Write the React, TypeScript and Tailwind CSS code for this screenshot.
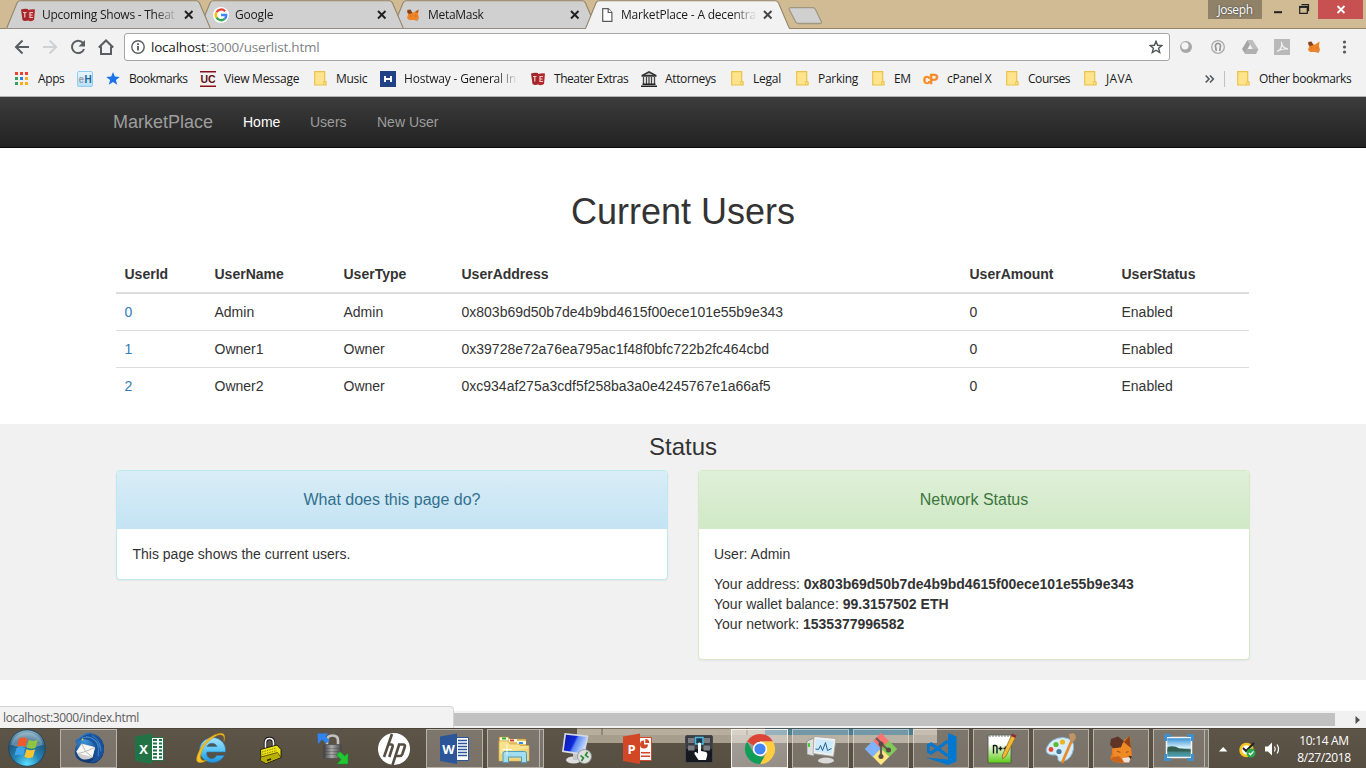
import React from "react";

const seg = "font-['Open_Sans','Noto_Sans',sans-serif]";

/* ---------- small icons ---------- */

const TE = () => (
  <svg width="16" height="16" viewBox="0 0 16 16">
    <path d="M1 2.500Q4 1.500 8 2L8 13.500Q4.500 14.500 2.500 13Z" fill="#a3262a" />
    <path d="M8 3Q12 2 15 2.500L14 13Q11.500 15 8 13.500Z" fill="#b3282d" />
    <path d="M3 5.500h3.500M4.800 5.500v5M13 5.500h-3v5h3M10 8h2.500" stroke="#f0c9ca" strokeWidth="1.200" fill="none" />
  </svg>
);

const Google = () => (
  <svg width="16" height="16" viewBox="0 0 16 16">
    <circle cx="8" cy="8" r="8" fill="#fff" />
    <g fill="none" strokeWidth="2.300">
      <path d="M12.100 4.200A5.300 5.300 0 0 0 3.500 5.300" stroke="#ea4335" />
      <path d="M3.500 5.300a5.300 5.300 0 0 0 0 5.400" stroke="#fbbc05" />
      <path d="M3.500 10.700a5.300 5.300 0 0 0 8.200 1.100" stroke="#34a853" />
      <path d="M11.700 11.800A5 5 0 0 0 13.300 8H8" stroke="#4285f4" />
    </g>
  </svg>
);

const FoxSmall = () => (
  <svg width="14" height="14" viewBox="0 0 14 14">
    <path d="M1.500 2.500L5 4.500H8L12.500 1.500L12 6L13 10L11.500 13L8 12H3L1 10L2 7Z" fill="#ee8427" />
    <path d="M1.200 2L4.500 1.500L6.500 5L3.500 6L1.500 5Z" fill="#86431d" />
    <path d="M9 4L12.500 1.500L12 5Z" fill="#b65c1f" />
    <path d="M4 7.500h1.500v1H4zM9 7.500h1.500v1H9z" fill="#c9671c" />
    <path d="M10 11l2.500-.5-1 2.500z" fill="#a5a19c" />
  </svg>
);

const Page = () => (
  <svg className="ml-[3px]" width="11" height="14" viewBox="0 0 11 14" fill="#fff" stroke="#5a5a5a" strokeWidth="1.200">
    <path d="M.7.7h5.500L9.900 4.500v8.800H.7z" />
    <path d="M6.200 .7v3.800h3.700" />
  </svg>
);

const Folder = () => (
  <svg width="13" height="15" viewBox="0 0 13 15">
    <path d="M.7.700h10v9.500l1.400.8v3H.7z" fill="#ffe48d" stroke="#ebc34a" strokeWidth="1.200" />
    <path d="M9.800 14v-3.500h2.400" fill="none" stroke="#ebc34a" strokeWidth="1" />
  </svg>
);

const AppsIcon = () => (
  <svg className="ml-px" width="13" height="13" viewBox="0 0 13 13">
    <path d="M0 0h3v3H0zM5 0h3v3H5zM10 0h3v3h-3z" fill="#ea4335" />
    <path d="M0 5h3v3H0zM0 10h3v3H0z" fill="#34a25a" />
    <path d="M5 5h3v3H5z" fill="#2a80e8" />
    <path d="M5 10h3v3H5zM10 5h3v3h-3zM10 10h3v3h-3z" fill="#f6b01a" />
  </svg>
);

const EH = () => (
  <svg width="16" height="16" viewBox="0 0 16 16">
    <defs>
      <linearGradient id="eh" x1="0" y1="0" x2="0" y2="1">
        <stop offset="0" stopColor="#e9f6fd" />
        <stop offset="1" stopColor="#b4e0fa" />
      </linearGradient>
    </defs>
    <rect x=".5" y=".5" width="15" height="15" rx="1.500" fill="url(#eh)" stroke="#8fcdf2" />
    <text x="1.600" y="11.800" fontSize="10" fontWeight="700" fontFamily="Liberation Sans" fill="#9aa0a4" textLength="5.500">e</text>
    <text x="7.400" y="11.800" fontSize="10" fontWeight="700" fontFamily="Liberation Sans" fill="#1e6796">H</text>
  </svg>
);

const BlueStar = () => (
  <svg width="14" height="13" viewBox="0 0 14 13">
    <path d="M7 0l1.800 4.600 5 .3-3.900 3.100 1.300 4.800L7 10.100l-4.200 2.700 1.300-4.800L.2 4.900l5-.3z" fill="#1a73e8" />
  </svg>
);

const UC = () => (
  <svg width="16" height="16" viewBox="0 0 16 16">
    <path d="M0 0h16v1.500H0zM0 14.500h16V16H0z" fill="#8b1013" />
    <text x="8" y="12" textAnchor="middle" fontSize="10.500" fontWeight="700" fontFamily="Liberation Sans" fill="#5e1013">UC</text>
  </svg>
);

const Hostway = () => (
  <svg width="16" height="16" viewBox="0 0 16 16">
    <path d="M0 0h16v16H0z" fill="#1f4186" />
    <path d="M5 5v6M11 5v6M5 8h6" stroke="#fff" strokeWidth="1.900" />
  </svg>
);

const Court = () => (
  <svg width="16" height="16" viewBox="0 0 16 16">
    <path d="M8 0l7.500 4v1.700H.5V4z" fill="#333" />
    <path d="M4 4l4-2.200L12 4z" fill="#bbb" />
    <path d="M2.500 6v7M5.500 6v7M8 6v7M10.500 6v7M13.500 6v7" stroke="#444" strokeWidth="1.300" />
    <path d="M1.500 12.500h13V14h-13zM0 14.500h16V16H0z" fill="#222" />
  </svg>
);

const CP = () => (
  <svg width="17" height="14" viewBox="0 0 17 14">
    <text x="0" y="11.500" fontSize="14" fontWeight="700" fontFamily="Liberation Sans" fill="#f68b1f" stroke="#f68b1f" strokeWidth=".3" textLength="15.500">cP</text>
  </svg>
);

/* ---------- tab strip ---------- */

type TabProps = { icon: React.ReactNode; label: string; active?: boolean; z: string; text: string };

const Tab = ({ icon, label, active, z, text }: TabProps) => (
  <div className={`relative -mr-3 h-[29px] w-[205px] shrink-0 ${z}`}>
    <svg className="absolute inset-0" width="205" height="29" viewBox="0 0 205 29">
      <path
        d="M0 29L1 27.500L11 3Q12 .8 14 .8H190.500Q192.500 .8 193.500 3L204 27.500L205 29"
        fill={active ? "#f2f2f2" : "#d0d0d0"}
        stroke="#94856a"
        strokeWidth="1.100"
      />
      {!active && <path d="M0 28.500H205" stroke="#958d82" />}
    </svg>
    <div className="relative flex h-[29px] items-center pl-3.5 pt-px">
      <div className="flex w-[22px] shrink-0">{icon}</div>
      <div className={`w-[137px] whitespace-nowrap text-[12px] text-[#1b1b1b] ${text} [mask-image:linear-gradient(to_right,black_112px,transparent_136px)]`}>
        {label}
      </div>
      <svg width="15" height="10" viewBox="0 0 15 10">
        <path d="M6 1l7.500 7.500M13.500 1L6 8.500" stroke={active ? "#444" : "#1f1f1f"} strokeWidth="1.900" />
      </svg>
    </div>
  </div>
);

const TabStrip = () => (
  <div className="flex h-[29px] border-b border-[#94856a] bg-[#d1bb94]">
    <div className="flex h-[29px] w-[784px] pl-1.5">
      <Tab icon={<TE />} label="Upcoming Shows - Theat" z="z-[4]" text="tracking-[-0.25px]" />
      <Tab icon={<Google />} label="Google" z="z-[3]" text="tracking-[-0.2px]" />
      <Tab icon={<FoxSmall />} label="MetaMask" z="z-[2]" text="tracking-[-0.3px]" />
      <Tab icon={<Page />} label="MarketPlace - A decentra" active z="z-[5]" text="tracking-[-0.2px]" />
    </div>
    <svg className="ml-1 mt-[7px]" width="36" height="18" viewBox="0 0 36 18">
      <path d="M3.500.7H24.500Q26.500.7 27.500 2.500L33.500 15Q34 16.500 32 16.500H10.500Q8.500 16.500 7.500 14.500L1.200 2.500Q.8.700 3 .7z" fill="#d0d0d0" stroke="#a19880" strokeWidth="1.300" />
    </svg>
    <div className="grow" />
    <div className="flex h-[19px] w-[54px] items-center justify-center bg-[#8f8268] text-[12px] tracking-[-0.4px] text-white [text-shadow:0_0_2px_#333]">Joseph</div>
    <svg width="56" height="20" viewBox="0 0 56 20" fill="none" stroke="#222" strokeWidth="1.500">
      <path d="M12 12.200h8" strokeWidth="2" />
      <path d="M37.700 6.700h7.600v6.600h-7.600zM39.500 4.700h7v6.500" strokeWidth="1.200" />
      <path d="M37 6.900h9" strokeWidth="2" />
    </svg>
    <svg className="mr-[3px] bg-[#c75050]" width="45" height="19" viewBox="0 0 45 19">
      <path d="M19.500 6l7 7M26.500 6l-7 7" stroke="#fff" strokeWidth="1.800" />
    </svg>
  </div>
);

/* ---------- toolbar ---------- */

const NavIcons = () => (
  <svg width="124" height="36" viewBox="0 0 124 36" fill="none" stroke="#5a5d61" strokeWidth="2">
    <path d="M29 18H16.500M22.500 11.500l-6.500 6.500 6.500 6.500" />
    <path d="M43 18h12.500M49.500 11.500l6.500 6.500-6.500 6.500" stroke="#d0d1d3" />
    <path d="M83 14A6.200 6.200 0 1 0 84 20" />
    <path d="M85 11v6.500h-6.500z" fill="#5a5d61" stroke="none" />
    <path d="M98.800 18.500L106 11.500l7.200 7M101 17.500V25h10v-7.500" strokeWidth="2" />
  </svg>
);

const ExtIcons = () => (
  <svg width="196" height="36" viewBox="1 0 196 36">
    <circle cx="17" cy="18" r="6" fill="#a7a7a7" />
    <circle cx="16" cy="16.800" r="3.600" fill="#f5f5f5" />
    <circle cx="49" cy="18" r="6.300" fill="none" stroke="#a9a9a9" strokeWidth="1.300" />
    <path d="M47.300 22l-.6-3.800a2.600 2.600 0 1 1 4.600 0l-.6 3.800" fill="none" stroke="#959595" strokeWidth="1.700" />
    <path d="M78.500 11h5l6 9.500h-5.500z" fill="#bdbdbd" />
    <path d="M78.500 11l2.500 4.500-5 9-3-4.500z" fill="#a4a4a4" />
    <path d="M78.500 20h11l-2.500 5H75.500z" fill="#b0b0b0" />
    <path d="M105 10h16v16h-16z" fill="#b9b9b9" />
    <path d="M108 22.500q6-3 4.500-9.500q0 6 6.500 7q-6-.5-11 2.500" fill="none" stroke="#f0f0f0" strokeWidth="1.300" />
    <g transform="translate(138 11)">
      <path d="M1.500 2.500L5 4.500H8L12.500 1.500L12 6L13 10L11.500 13L8 12H3L1 10L2 7Z" fill="#ee8427" />
      <path d="M1.200 2L4.500 1.500L6.500 5L3.500 6L1.500 5Z" fill="#86431d" />
      <path d="M4 7.500h1.500v1H4zM9 7.500h1.500v1H9z" fill="#c9671c" />
      <path d="M10 11l2.500-.5-1 2.500z" fill="#a5a19c" />
    </g>
    <g fill="#55585c">
      <circle cx="175.500" cy="13" r="1.600" />
      <circle cx="175.500" cy="18" r="1.600" />
      <circle cx="175.500" cy="23" r="1.600" />
    </g>
  </svg>
);

const Toolbar = () => (
  <div className="flex h-[36px] bg-[#f2f2f2]">
    <NavIcons />
    <div className="mt-1 flex h-7 w-[1046px] shrink-0 items-center rounded-[3px] border border-[#a6a6a6] bg-white pl-1.5 pr-1.5">
      <svg width="14" height="14" viewBox="0 0 14 14">
        <circle cx="7" cy="7" r="6.200" fill="none" stroke="#5a5d61" strokeWidth="1.400" />
        <path d="M7 6v4.500M7 3.300v1.600" stroke="#444" strokeWidth="1.600" />
      </svg>
      <div className="ml-1.5 grow whitespace-nowrap text-[13.5px] tracking-[-0.21px] text-[#808285]">
        <span className="text-[#1a1a1a]">localhost</span>:3000/userlist.html
      </div>
      <svg width="14" height="14" viewBox="0 0 14 14">
        <path d="M7 1.300l1.600 4 4.300.3-3.300 2.700 1.100 4.200L7 10.200l-3.700 2.300 1.100-4.200L1.100 5.600l4.300-.3z" fill="none" stroke="#4f5257" strokeWidth="1.400" />
      </svg>
    </div>
    <ExtIcons />
  </div>
);

const bookmarks = [
  { icon: <AppsIcon />, label: "Apps", slot: "w-[63px]", iw: "w-6", t: "tracking-[-0.4px]" },
  { icon: <EH />, label: "", slot: "w-[29px]", iw: "w-[22px]", t: "" },
  { icon: <BlueStar />, label: "Bookmarks", slot: "w-[94px]", iw: "w-[23px]", t: "tracking-[-0.52px]" },
  { icon: <UC />, label: "View Message", slot: "w-[114px]", iw: "w-6", t: "tracking-[-0.25px]" },
  { icon: <Folder />, label: "Music", slot: "w-[66px]", iw: "w-[22px]", t: "tracking-[-0.3px]" },
  { icon: <Hostway />, label: "Hostway - General Inf", slot: "w-[150px]", iw: "w-6", t: "w-[120px] tracking-[-0.2px] [mask-image:linear-gradient(to_right,black_92px,transparent_114px)]" },
  { icon: <TE />, label: "Theater Extras", slot: "w-[111px]", iw: "w-6", t: "tracking-[-0.48px]" },
  { icon: <Court />, label: "Attorneys", slot: "w-[90px]", iw: "w-6", t: "tracking-[-0.35px]" },
  { icon: <Folder />, label: "Legal", slot: "w-[65px]", iw: "w-[22px]", t: "tracking-[-0.25px]" },
  { icon: <Folder />, label: "Parking", slot: "w-[76px]", iw: "w-[22px]", t: "tracking-[-0.3px]" },
  { icon: <Folder />, label: "EM", slot: "w-[51px]", iw: "w-[22px]", t: "tracking-[-0.4px]" },
  { icon: <CP />, label: "cPanel X", slot: "w-[83px]", iw: "w-6", t: "tracking-[-0.3px]" },
  { icon: <Folder />, label: "Courses", slot: "w-[78px]", iw: "w-[22px]", t: "tracking-[-0.45px]" },
  { icon: <Folder />, label: "JAVA", slot: "w-[121px]", iw: "w-[22px]", t: "tracking-[0.3px]" },
];

const BookmarkBar = () => (
  <div className="flex h-8 items-center border-b border-[#b0b3b2] bg-[#f2f2f2] pb-1 pl-[14px] text-[12px] text-[#1a1a1a]">
    {bookmarks.map((b, i) => (
      <div key={i} className={`flex shrink-0 items-center ${b.slot}`}>
        <div className={`flex shrink-0 ${b.iw}`}>{b.icon}</div>
        <div className={`whitespace-nowrap ${b.t}`}>{b.label}</div>
      </div>
    ))}
    <svg width="19" height="16" viewBox="0 0 19 16">
      <path d="M.7 4.500L4 8 .7 11.500M5 4.500L8.300 8 5 11.500" fill="none" stroke="#55585c" strokeWidth="1.600" />
    </svg>
    <div className="mr-3 h-4 w-px bg-[#c0c0c0]" />
    <Folder />
    <div className="ml-[9px] whitespace-nowrap tracking-[-0.42px]">Other bookmarks</div>
  </div>
);

/* ---------- page ---------- */

const cols = "grid grid-cols-[90px_129px_118px_508px_152px_136px]";
const users = [
  ["0", "Admin", "Admin", "0x803b69d50b7de4b9bd4615f00ece101e55b9e343", "0", "Enabled"],
  ["1", "Owner1", "Owner", "0x39728e72a76ea795ac1f48f0bfc722b2fc464cbd", "0", "Enabled"],
  ["2", "Owner2", "Owner", "0xc934af275a3cdf5f258ba3a0e4245767e1a66af5", "0", "Enabled"],
];

const PageContent = () => (
  <div className="h-[614px] overflow-hidden bg-white font-['Liberation_Sans',Arial,sans-serif] text-[14px] leading-5 text-[#333]">
    <nav className="flex h-[51px] items-center border-b border-[#080808] bg-gradient-to-b from-[#3c3c3c] to-[#222] pl-[113px] text-[#9d9d9d]">
      <span className="w-[130px] text-[18px]">MarketPlace</span>
      <span className="w-[67px] text-white">Home</span>
      <span className="w-[67px]">Users</span>
      <span>New User</span>
    </nav>
    <h1 className="mt-[44px] text-center text-[36px] leading-[40px]">Current Users</h1>
    <div className="ml-[116px] mt-[24px] w-[1133px]">
      <div className={`${cols} h-[38px] border-b-2 border-[#ddd] font-bold`}>
        {["UserId", "UserName", "UserType", "UserAddress", "UserAmount", "UserStatus"].map((h) => (
          <div key={h} className="p-2 pl-[8.5px]">{h}</div>
        ))}
      </div>
      {users.map((u, r) => (
        <div key={r} className={`${cols} h-[37px] ${r < 2 ? "border-b border-[#ddd]" : ""}`}>
          {u.map((c, i) => (
            <div key={i} className={`p-2 pl-[8.5px] ${i === 0 ? "text-[#337ab7]" : ""}`}>{c}</div>
          ))}
        </div>
      ))}
    </div>
    <section className="mt-[19px] h-[256px] bg-[#f1f1f1] pt-2.5">
      <h3 className="text-center text-[24px] leading-[26px]">Status</h3>
      <div className="mt-2.5 flex items-start gap-[30px] pl-[116px]">
        <div className="h-[110px] w-[552px] overflow-hidden rounded border border-[#bce8f1] bg-white shadow-[0_1px_2px_rgba(0,0,0,0.05)]">
          <div className="h-[58px] bg-gradient-to-b from-[#d9edf7] to-[#c4e3f3] text-center text-[16px] leading-[58px] text-[#31708f]">What does this page do?</div>
          <p className="px-[15.5px] pt-[15px]">This page shows the current users.</p>
        </div>
        <div className="h-[190px] w-[552px] overflow-hidden rounded border border-[#d6e9c6] bg-white shadow-[0_1px_2px_rgba(0,0,0,0.05)]">
          <div className="h-[58px] bg-gradient-to-b from-[#dff0d8] to-[#d0e9c6] text-center text-[16px] leading-[58px] text-[#3c763d]">Network Status</div>
          <div className="px-[15px] pt-[15px]">
            <p className="mb-2.5">User: Admin</p>
            <p>Your address: <b>0x803b69d50b7de4b9bd4615f00ece101e55b9e343</b></p>
            <p>Your wallet balance: <b>99.3157502 ETH</b></p>
            <p>Your network: <b>1535377996582</b></p>
          </div>
        </div>
      </div>
    </section>
  </div>
);

const ScrollBar = () => (
  <div className="relative flex h-[17px] items-center bg-[#f1f1f1]">
    <div className="ml-[17px] h-[13px] w-[1318px] bg-[#c1c1c1]" />
    <svg className="ml-5" width="6" height="8" viewBox="0 0 6 8"><path d="M.5 0v8L5 4z" fill="#505050" /></svg>
    <div className="absolute bottom-0 left-0 flex h-[22px] w-[454px] items-center rounded-tr-[4px] border-r border-t border-[#d4d4d4] bg-[#f2f2f2] pl-[3px] text-[12px] tracking-[-0.36px] text-[#5d5d5d]">
      localhost:3000/index.html
    </div>
  </div>
);

/* ---------- taskbar icons ---------- */

const S = ({ children, w = 32 }: { children: React.ReactNode; w?: number }) => (
  <svg width={w} height="36" viewBox={`0 0 ${w} 36`}>{children}</svg>
);

const StartOrb = () => (
  <svg width="40" height="40" viewBox="0 0 40 40">
    <defs>
      <radialGradient id="orb" cx=".5" cy=".95" r=".9">
        <stop offset="0" stopColor="#5fe0ff" />
        <stop offset=".4" stopColor="#2385b8" />
        <stop offset=".75" stopColor="#205a80" />
        <stop offset="1" stopColor="#7fa9bd" />
      </radialGradient>
    </defs>
    <circle cx="20" cy="20" r="18.300" fill="url(#orb)" stroke="#24455a" />
    <path d="M4 17A16.500 16.500 0 0 1 36 17Q20 22 4 17z" fill="#fff" opacity=".28" />
    <path d="M12 10.500q4.500-2 8.500.5l-2 8q-4-2.300-8.500-.5z" fill="#ef5b28" />
    <path d="M21.800 11.800q4 2.200 9 0l-2.300 8q-4.500 2-8.700-.2z" fill="#8fc63f" />
    <path d="M9.600 20q4.500-2 8.500.4l-2.100 7.600q-4-2.200-8.500-.4z" fill="#3fa4e8" />
    <path d="M19.500 21q4 2.300 8.700.3l-2.200 7.700q-4.500 2-8.600-.3z" fill="#fcc52d" />
  </svg>
);

const Thunderbird = () => (
  <S>
    <defs>
      <radialGradient id="tb" cx=".35" cy=".25" r=".85">
        <stop offset="0" stopColor="#3f97da" />
        <stop offset=".55" stopColor="#1b5399" />
        <stop offset="1" stopColor="#102458" />
      </radialGradient>
    </defs>
    <path d="M4 13Q0 9 6 7Q11 1 18 2Q29 4 31 15Q32 26 24 31Q21 33 16 32Q6 31 3 26Q0 19 4 13z" fill="url(#tb)" />
    <path d="M3.500 20.500L8.500 12.500L22 16L19.500 26.500Q14 29.500 9 28Q5 26 3.500 20.500z" fill="#cfcecb" />
    <path d="M3.500 20.500L9 13L22 16.500L19.500 26L5 22.500z" fill="#f7f7f5" />
    <path d="M9 13L12.500 20.500L22 16.500M5 22.500L12.500 20.500L19.500 26" fill="none" stroke="#b9b5b0" strokeWidth=".9" />
    <path d="M5 10Q13 6 19 11Q25 15 22.500 23Q21 29 16 32Q28 32 31 20Q31 7 18 3Q11 2 5 10z" fill="#1b519a" />
    <path d="M9 7q9-3 15 5q3 6 1 13M13 5.500q11 1 14.500 12M19 4.500q9 5 9 16" stroke="#3f8bcc" strokeWidth=".9" fill="none" />
    <circle cx="9.500" cy="8.500" r="1" fill="#e6cf52" />
  </S>
);

const Office = ({ letter, fill, kind }: { letter: string; fill: string; kind: string }) => (
  <S>
    <path d="M17.500 6.500h12v23h-12z" fill="#fff" stroke={fill} strokeWidth="1" />
    {kind === "x" && <path d="M19 9h4M25 9h3M19 12.500h4M25 12.500h3M19 16h4M25 16h3M19 19.500h4M25 19.500h3M19 23h4M25 23h3M19 26.500h4M25 26.500h3" stroke={fill} strokeWidth="2" />}
    {kind === "w" && <path d="M19 9.500h9M19 12.500h9M19 15.500h9M19 18.500h9M19 21.500h9M19 24.500h9" stroke={fill} strokeWidth="1.300" />}
    {kind === "p" && <path d="M22 9.500a4 4 0 1 0 4 4h-4zM23.300 8v4h4a4 4 0 0 0-4-4zM19 21h9v1.500h-9zM19 24.500h9V26h-9z" fill={fill} />}
    <path d="M1 5.500l17-3v30.500L1 30z" fill={fill} />
    <text x="9.500" y="22.500" textAnchor="middle" fontFamily="Open Sans" fontWeight="700" fontSize="13" fill="#fff">{letter}</text>
  </S>
);

const IE = () => (
  <S>
    <defs>
      <linearGradient id="ie" x1="0" y1="0" x2="0" y2="1">
        <stop offset="0" stopColor="#a9e2fb" />
        <stop offset=".5" stopColor="#5cc6f5" />
        <stop offset="1" stopColor="#1f93dc" />
      </linearGradient>
    </defs>
    <path d="M30.500 20.500A13 12.500 0 1 0 29.300 24.500H21.500a5 5 0 0 1-9.500-3.500H30.500zM12 15.500a5.500 5.500 0 0 1 10 0z" fill="url(#ie)" stroke="#1d79ba" strokeWidth=".6" />
    <path d="M29 10.500Q31.500 1.500 25 2.300Q14 4 6 16.500Q-1 29 3 31.300Q7 32.500 12 29.300Q5 31 5.500 25Q7 16 15 9Q24 1.500 28 4.500Q29.500 6 29 10.500z" fill="#f5c021" stroke="#c68e12" strokeWidth=".5" />
  </S>
);

const Padlock = () => (
  <S>
    <path d="M9.500 18v-6.500q0-4 4-4t4 4V15" fill="none" stroke="#151515" strokeWidth="3.400" />
    <path d="M9.500 18v-6.500q0-4 4-4t4 4V15" fill="none" stroke="#f2f2f2" strokeWidth="1.700" />
    <path d="M4.500 18.500L21 14l4 4.500v8L10 32.500l-5-3z" fill="#ece318" stroke="#171600" strokeWidth=".9" />
    <path d="M5 26l16-4 3.500 4-14.500 6-5-2.500z" fill="#b8af00" />
    <path d="M5 26l16.500-4.500 3.500 5" stroke="#3b3700" fill="none" strokeWidth=".8" />
    <path d="M6 21l14.500-4M6 23.500l15-4" stroke="#8d8600" strokeWidth="1" strokeDasharray="1.500 1" />
    <path d="M11 29.500l4-1.500" stroke="#292600" strokeWidth="1.600" />
  </S>
);

const WinScp = () => (
  <S>
    <defs>
      <linearGradient id="lk" x1="0" y1="0" x2="1" y2="0">
        <stop offset="0" stopColor="#3c3c3c" />
        <stop offset=".45" stopColor="#a9a9a9" />
        <stop offset="1" stopColor="#454545" />
      </linearGradient>
    </defs>
    <path d="M10 15V9.500q0-5 5.500-5t5.500 5V15" fill="none" stroke="#c4c4c4" strokeWidth="2.600" />
    <rect x="6.500" y="13.500" width="18" height="14" rx="1" fill="url(#lk)" stroke="#4b4b4b" strokeWidth=".7" />
    <path d="M7 17.500h17M7 20.500h17M7 23.500h17" stroke="#333" strokeWidth=".7" opacity=".4" />
    <path d="M.5 2.500h11L8.700 5.300l3.800 4.200-3.300 3L5 8.500 1 13z" fill="#2f84f0" />
    <path d="M31 33V22l-3.300 3L23 20.500 19.500 24l4.500 4.500L20 33z" fill="#22c832" stroke="#128a1e" strokeWidth=".5" />
  </S>
);

const Hp = () => (
  <S w={34}>
    <circle cx="17" cy="18" r="16" fill="#fff" />
    <g fill="none" stroke="#554d43" strokeWidth="2.600">
      <path d="M15 3L7 26M10.500 13.500h3.500q2.300 0 1.500 2.500L12.300 26" />
      <path d="M22.500 12.500L15.500 34M22 13.500h4.200q2.300 0 1.500 2.500l-2.300 7q-.8 2-2.700 2h-4" />
    </g>
  </S>
);

const Explorer = () => (
  <S w={34}>
    <path d="M2 6h9l2 2h16v20H2z" fill="#e8c565" stroke="#b08a35" strokeWidth=".6" />
    <path d="M3 6.500h8v3H3zM12 8h8v3h-8zM20 10h9v3h-9z" fill="#fffbe8" />
    <path d="M5 6.500h4v2H5z" fill="#28b32e" />
    <path d="M13 8.500h4v2h-4z" fill="#d93e28" />
    <path d="M22 11h4v2h-4z" fill="#2f91df" />
    <path d="M2 10h9l2 3h9l1 1.500h9V30H2z" fill="#f8e28e" stroke="#cba84b" strokeWidth=".7" />
    <path d="M3 23l28-6v13H3z" fill="#efcf6c" opacity=".7" />
    <path d="M6 31.500V22.500q0-2 2-2h19.500q2 0 2 2v9h-5V26H11.500v5.500z" fill="#a4dcf0" stroke="#4a9fc3" />
    <path d="M10 13v11M5 18.500h10" stroke="#fff" strokeWidth="1" opacity=".8" />
  </S>
);

const Rdp = () => (
  <S>
    <defs>
      <linearGradient id="rdp" x1="0" y1="0" x2="1" y2=".4">
        <stop offset="0" stopColor="#0b17a0" />
        <stop offset=".5" stopColor="#1028dd" />
        <stop offset=".6" stopColor="#5c86f2" />
        <stop offset="1" stopColor="#c2dcff" />
      </linearGradient>
    </defs>
    <ellipse cx="12.500" cy="29" rx="7.500" ry="3.500" fill="#dedede" />
    <path d="M12 22h6l-2 7h-4z" fill="#c7c7c7" />
    <path d="M3.500 2L27.500 4.500l-4 20L1 21z" fill="#d5d9e3" />
    <path d="M5 3.800L25.800 6l-3.400 16.500L2.800 19.500z" fill="url(#rdp)" />
    <circle cx="23.500" cy="25.500" r="7" fill="#dcdfdd" stroke="#898c8b" strokeWidth=".8" />
    <path d="M19.500 24.500l3 2.500-2 3M26.500 21l-2 3 3 2.500" fill="none" stroke="#26852f" strokeWidth="1.600" />
  </S>
);

const Touch = () => (
  <S>
    <rect x="2.500" y="4.500" width="27" height="27" rx="1.500" fill="#16191d" stroke="#45484c" />
    <path d="M3 5h26v13H3z" fill="#3a3d41" />
    <path d="M5 7h6.500v5H5zM20.500 7H27v5h-6.500zM5 14.500h6.500v5H5zM20.500 14.500H27v5h-6.500z" fill="#7a7e82" />
    <path d="M12.500 6.500h7.500V13h-7.500z" fill="#1b3b4b" stroke="#49bbe5" strokeWidth="1.500" />
    <path d="M15 12.500q1.500-2 3 0V20l5 1q1.500.7 1.300 3l-1.300 5h-7.500l-4-6q-.5-2.500 1.500-2l2 1.500z" fill="#fff" />
  </S>
);

const Chrome = () => (
  <S>
    <path d="M16 18L3 10.500A15 15 0 0 1 29 10.500H16z" fill="#db4437" />
    <path d="M16 18V10.500h13A15 15 0 0 1 16 33l6.500-11.200z" fill="#ffcd40" />
    <path d="M3 10.500L9.500 21.800 16 25.500h4.300L16 33A15 15 0 0 1 3 10.500z" fill="#0f9d58" />
    <circle cx="16" cy="18" r="7.200" fill="#fff" />
    <circle cx="16" cy="18" r="5.600" fill="#4285f4" />
  </S>
);

const TaskMgr = () => (
  <S w={34}>
    <path d="M3 10l7-3v18l-7-1.500z" fill="#dfe0df" stroke="#7d817e" strokeWidth=".7" />
    <path d="M4 12h2v4H4z" fill="#48d128" />
    <ellipse cx="22" cy="29.500" rx="8" ry="3" fill="#dadada" />
    <path d="M10 5.500l22 2-2.500 18-20.500-3z" fill="#f0f0ed" stroke="#9fa3a2" strokeWidth=".8" />
    <path d="M12 8l17.500 1.800-2 13L11 20.500z" fill="#ceeafa" />
    <path d="M11.500 18l3 .5 2-4 2 5 3-8 2 8 4-2" fill="none" stroke="#1f6299" />
  </S>
);

const Git = () => (
  <S w={34}>
    <path d="M17 2l8.200 8.200L17 18.500 8.800 10.200z" fill="#ff7272" />
    <path d="M9 9.800l8.200 8.200L9 26.200.8 18z" fill="#80b3ff" />
    <path d="M25 9.800l8.200 8.200-8.200 8.200-8.200-8.200z" fill="#83c95a" />
    <path d="M17 17.500l8.200 8.200L17 34l-8.200-8.300z" fill="#ffe680" />
    <path d="M12 7l5 5v14M17 12.500l7 6.500" fill="none" stroke="#655c52" strokeWidth="2.200" />
    <circle cx="17" cy="13" r="2.500" fill="#554d43" /><circle cx="17" cy="25.500" r="2.500" fill="#554d43" /><circle cx="24.500" cy="19" r="2.500" fill="#554d43" />
  </S>
);

const VsCode = () => (
  <S w={34}>
    <path d="M24 2l8.500 3.500v25L24 34 1.500 26.500l22.500 2z" fill="#0078cf" />
    <path d="M24 10L6.500 22.500M24 25L6.500 12.500" stroke="#0078cf" strokeWidth="3.200" />
    <path d="M7.500 11L3 13.500v8L7.500 24V21L5.800 19.500v-4L7.500 14z" fill="#0078cf" />
  </S>
);

const Npp = () => (
  <S>
    <defs>
      <linearGradient id="npp" x1="0" y1="0" x2="0" y2="1">
        <stop offset=".3" stopColor="#fff" />
        <stop offset="1" stopColor="#5dcb12" />
      </linearGradient>
    </defs>
    <path d="M3 4h23v28H3z" fill="url(#npp)" stroke="#4a5447" strokeWidth=".8" />
    <path d="M5 3v3M8 3v3M11 3v3M14 3v3M17 3v3M20 3v3M23 3v3" stroke="#777" />
    <path d="M8.500 22.500v-8.500M8.500 14.500h1.500q2 0 2 2v6M13.500 17.500h4M15.500 15.500v4M18.500 17.500h4M20.500 15.500v4" fill="none" stroke="#171717" strokeWidth="1.400" />
    <path d="M26.500 4.500l4 2L21 25l-3.500 3V24z" fill="#f2b932" stroke="#8b6929" strokeWidth=".8" />
    <path d="M27 2.500l4.500 2-1 2.500-4.500-2z" fill="#8c2f2d" />
  </S>
);

const Paint = () => (
  <S>
    <path d="M2 16Q6 7 18 6.500Q30 7.500 28.500 18Q26.500 28 19 30Q12 32 13 26Q12 23 7 24Q-1 23 2 16z" fill="#d8edfa" stroke="#89bcda" />
    <circle cx="6" cy="18.500" r="2.400" fill="#e74735" />
    <circle cx="11" cy="13.500" r="2.600" fill="#5fb931" />
    <circle cx="17.500" cy="11" r="2.600" fill="#eeb420" />
    <circle cx="14" cy="20.500" r="2.600" fill="#44799b" />
    <path d="M26.500 10L17 32" stroke="#e58b2f" strokeWidth="2.800" />
    <path d="M25 10l-1-7 4-1q4 2 2.500 6l-3 4z" fill="#c09465" />
  </S>
);

const FoxBig = () => (
  <S>
    <path d="M7 14l9-3 9-6 1 12 1 8-3 6-5 1-10-1-4-4 2-4z" fill="#ea7d22" />
    <path d="M6 8l7-2.500 6 4.500-3 6.500-8 1-3-4z" fill="#5e3526" />
    <path d="M8 17.500l8-1 2-5 8 6-1 6-8 3-8-1z" fill="#f08a24" />
    <path d="M24.500 5l1.500 12-7-6z" fill="#8e431d" />
    <path d="M5 27l9-2 5 6.500-9-.5z" fill="#c9641a" />
    <path d="M17 27l9-1-2 5.500-5-.3z" fill="#eee3da" />
    <path d="M23.500 25l3.500.5-1.500 2.500z" fill="#29221f" />
    <path d="M12 20l3.500 1.500M21 21.500l2.500-1" stroke="#a3541c" strokeWidth="1.200" />
  </S>
);

const Photo = () => (
  <S w={32}>
    <defs>
      <linearGradient id="ph" x1="0" y1="0" x2="0" y2="1">
        <stop offset="0" stopColor="#2b8bd4" />
        <stop offset=".5" stopColor="#d4effb" />
        <stop offset=".65" stopColor="#437d78" />
        <stop offset="1" stopColor="#4aa3bd" />
      </linearGradient>
    </defs>
    <path d="M3.500 6.500h25v20h-25z" fill="url(#ph)" stroke="#f4f4f4" strokeWidth="1.500" />
    <path d="M4.500 16q6-2 12 1.500l11 1v2h-23z" fill="#335f50" />
    <path d="M2.500 10V4.500H8M24 4.500h5.500V10M2.500 23v5.500H8M24 28.500h5.500V23" fill="none" stroke="#438dc8" strokeWidth="3" />
  </S>
);

const TaskItem = ({ children, w = "w-[57px]", open, stacked, focused }: { children: React.ReactNode; w?: string; open?: boolean; stacked?: boolean; focused?: boolean }) => (
  <div className={`flex h-[39px] shrink-0 ${w}`}>
    <div className={`flex grow items-center justify-center ${focused ? "border border-[#f1f0ec] bg-gradient-to-br from-white/45 to-white/35" : open ? "border border-white/45 bg-white/20" : ""}`}>
      {children}
    </div>
    {stacked && <div className="w-1 border border-l-0 border-white/45 bg-white/20" />}
  </div>
);

const Taskbar = () => (
  <div className="relative h-10 overflow-hidden bg-gradient-to-b from-[#5e5549] to-[#574e42]">
    <svg className="absolute left-0 top-0" width="1366" height="40" viewBox="0 0 1366 40">
      <path d="M577 0H937V15H577z" fill="#a89e8d" />
      <path d="M577 0H937V7H577z" fill="#b8ae9d" />
      <path d="M765 0H913V7H765z" fill="#4f7d90" />
      <path d="M602 0V7M747 0V7" stroke="#877c6a" strokeWidth="1.500" />
      <path d="M0 .5H1366" stroke="#3f392f" opacity=".55" />
    </svg>
    <div className="relative flex gap-1 pt-px">
      <div className="-mt-px flex w-14 shrink-0 pl-[7px]"><StartOrb /></div>
      <TaskItem open><Thunderbird /></TaskItem>
      <TaskItem><Office letter="X" fill="#217346" kind="x" /></TaskItem>
      <TaskItem><IE /></TaskItem>
      <TaskItem><Padlock /></TaskItem>
      <TaskItem><WinScp /></TaskItem>
      <TaskItem><Hp /></TaskItem>
      <TaskItem open><Office letter="W" fill="#2b579a" kind="w" /></TaskItem>
      <TaskItem open stacked><Explorer /></TaskItem>
      <TaskItem><Rdp /></TaskItem>
      <TaskItem><Office letter="P" fill="#d24726" kind="p" /></TaskItem>
      <TaskItem><Touch /></TaskItem>
      <TaskItem focused><Chrome /></TaskItem>
      <TaskItem open><TaskMgr /></TaskItem>
      <TaskItem open w="w-[56px]"><Git /></TaskItem>
      <TaskItem open w="w-[56px]"><VsCode /></TaskItem>
      <TaskItem open w="w-[56px]"><Npp /></TaskItem>
      <TaskItem open w="w-[56px]"><Paint /></TaskItem>
      <TaskItem open w="w-[56px]"><FoxBig /></TaskItem>
      <TaskItem open stacked w="w-[56px]"><Photo /></TaskItem>
      <svg className="shrink-0" width="72" height="39" viewBox="0 0 72 39">
        <path d="M6 22.500l4.200-4.500 4.200 4.500z" fill="#fff" />
        <circle cx="33.500" cy="21" r="6" fill="#fff" stroke="#f7c51d" strokeWidth="2.500" />
        <path d="M30 19l3 3 8-8" stroke="#222" strokeWidth="2" fill="none" />
        <circle cx="38" cy="24" r="4.500" fill="#27a849" />
        <path d="M35.800 24l1.700 1.700 3-3.300" stroke="#fff" strokeWidth="1.300" fill="none" />
        <path d="M52 17.500h3l4-4v13l-4-4h-3z" fill="#fff" />
        <path d="M61.500 17.500q1.500 2.500 0 5M64 15.500q3 4.500 0 9" stroke="#fff" strokeWidth="1.200" fill="none" />
      </svg>
      <div className="-ml-2 w-[86px] shrink-0 whitespace-nowrap pt-[3px] text-center text-[12px] leading-[17px] tracking-[-0.35px] text-white">
        <div>10:14 AM</div>
        <div>8/27/2018</div>
      </div>
    </div>
  </div>
);

export default function App() {
  return (
    <div className={`h-[768px] w-[1366px] overflow-hidden bg-white ${seg}`}>
      <TabStrip />
      <Toolbar />
      <BookmarkBar />
      <PageContent />
      <ScrollBar />
      <Taskbar />
    </div>
  );
}
